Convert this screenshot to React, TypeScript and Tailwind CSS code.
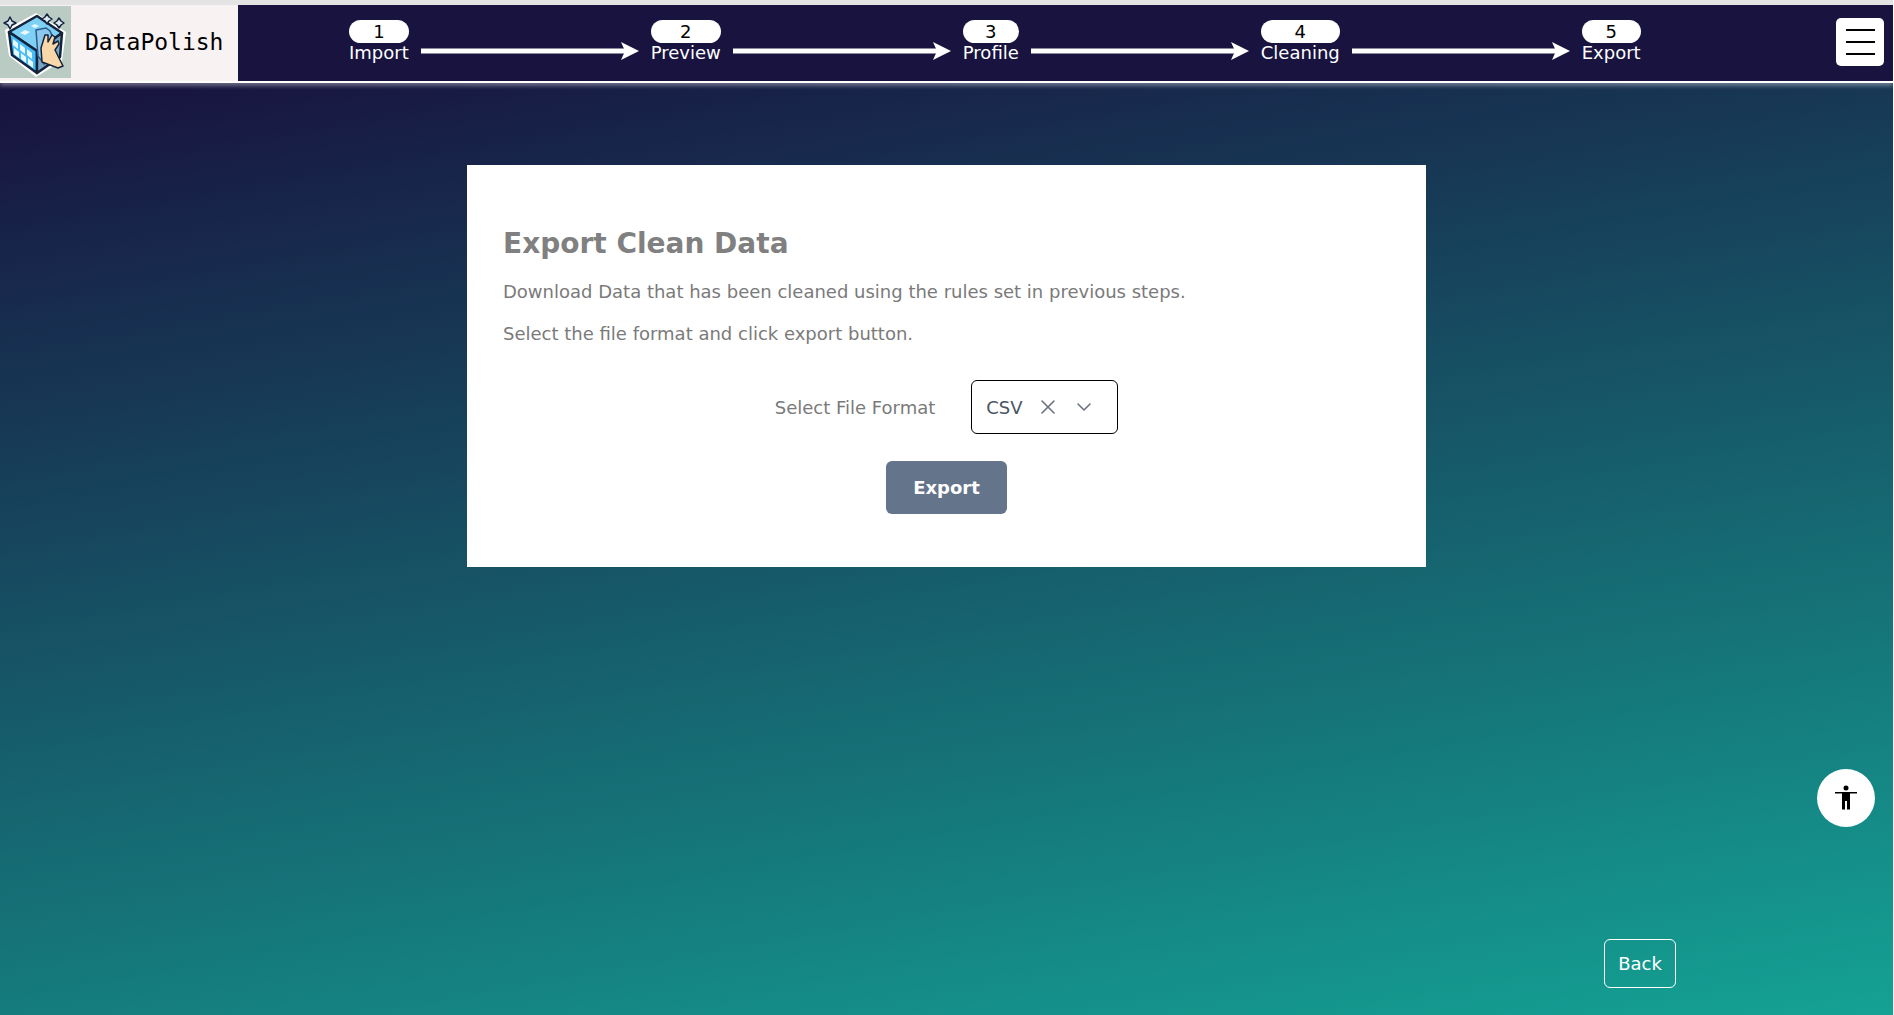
import { Fragment } from 'react'
import { ChevronDown, X } from 'lucide-react'

const steps = [
  { n: 1, label: 'Import' },
  { n: 2, label: 'Preview' },
  { n: 3, label: 'Profile' },
  { n: 4, label: 'Cleaning' },
  { n: 5, label: 'Export' },
]

function Logo() {
  return (
    <svg viewBox="0 0 71 72" className="w-[71px] h-[72px] shrink-0 bg-[#b9cbc2]">
      <path d="M36 7 L66 26 L62 55 L36 71 L9 50 L5 24 Z" fill="#fff" />
      <path d="M9 26 L37 10 L62 27 L37 45 Z" fill="#7fd0f5" stroke="#14233c" strokeWidth="2.5" strokeLinejoin="round" />
      <path d="M9 26 L37 45 L37 67 L12 49 Z" fill="#47bdf8" stroke="#14233c" strokeWidth="2.5" strokeLinejoin="round" />
      <path d="M37 45 L62 27 L60 51 L37 67 Z" fill="#7aa6c4" stroke="#14233c" strokeWidth="2.5" strokeLinejoin="round" />
      <path d="M13 33 l5 4 v6 l-5 -4 Z M20 38 l5 4 v6 l-5 -4 Z M27 43 l5 4 v6 l-5 -4 Z M14 42 l5 4 v6 l-5 -4 Z M21 47 l5 4 v6 l-5 -4 Z M28 52 l5 4 v6 l-5 -4 Z" fill="#e8f8ff" />
      <path d="M20 27 l5 -3 l5 2 l-5 3 Z M31 20 l4 -2 l4 2 l-4 2 Z" fill="#e8f8ff" />
      <path d="M36 24 L46 22 L50 25 L54 34 L44 58 L38 50 Z" fill="#8cc8ee" stroke="#2a5d8a" strokeWidth="1.5" />
      <path d="M42 56 L41 42 L45 29 L48 29 L48 36 L52 29 L55 31 L53 38 L58 35 L59 38 L55 44 L58 50 L63 60 L58 62 L50 59 Z" fill="#fad7a8" stroke="#14233c" strokeWidth="1.5" strokeLinejoin="round" />
      <path d="M10 11 l2 4 l4 2 l-4 2 l-2 4 l-2 -4 l-4 -2 l4 -2 Z M47 8 l2 3 l3 2 l-3 2 l-2 3 l-2 -3 l-3 -2 l3 -2 Z M59 12 l2 3 l3 2 l-3 2 l-2 3 l-2 -3 l-3 -2 l3 -2 Z" fill="#dfeaf2" stroke="#14233c" strokeWidth="1.5" strokeLinejoin="round" />
    </svg>
  )
}

function Arrow() {
  return (
    <svg viewBox="0 0 218 18" className="w-[218px] h-[18px] shrink-0 mt-[22px] mx-3">
      <path d="M0 9 H204" stroke="#fff" strokeWidth="5" />
      <path d="M200 0 L218 9 L200 18 L204 9 Z" fill="#fff" />
    </svg>
  )
}

function AccessibilityIcon() {
  return (
    <svg viewBox="0 0 24 26" className="w-6 h-[26px]">
      <circle cx="12" cy="3" r="2.5" fill="#000" />
      <path d="M1 7 H23 V8.5 H16 V24.5 H13 V16 H11 V24.5 H8 V8.5 H1 Z" fill="#000" />
    </svg>
  )
}

export default function App() {
  return (
    <div className="min-h-screen h-[1015px] overflow-hidden flex flex-col bg-[linear-gradient(170deg,#181440_0%,#181440_8%,#14a294_100%)] font-['DejaVu_Sans',sans-serif] border-r border-white">
      <header className="shrink-0 h-[83px] border-t-[5px] border-t-[#e4e4e4] border-b-2 border-b-white bg-[#18143f] flex shadow-[0_3px_4px_rgba(255,255,255,0.35)]">
        <div className="w-[238px] h-[76px] bg-[#f8f2f2] flex items-start shrink-0">
          <div className="mt-px">
            <Logo />
          </div>
          <span className="ml-[14px] mt-[20px] text-[23px] leading-[34px] text-black font-['DejaVu_Sans_Mono',monospace]">DataPolish</span>
        </div>
        <nav className="flex items-start pl-[111px] pt-[15px]">
          {steps.map((step, i) => (
            <Fragment key={step.n}>
              {i > 0 && <Arrow />}
              <div className="flex flex-col items-stretch">
                <div className="h-[23px] rounded-full bg-white text-black text-center text-[18px] leading-[23px]">{step.n}</div>
                <div className="text-white text-[18px] leading-[22px] -mt-px text-center">{step.label}</div>
              </div>
            </Fragment>
          ))}
        </nav>
        <button className="ml-auto mr-[9px] mt-[13px] w-[48px] h-[48px] rounded-[5px] bg-white flex flex-col items-center justify-center gap-[10px]">
          <span className="block w-[29px] h-[2px] bg-black" />
          <span className="block w-[29px] h-[2px] bg-black" />
          <span className="block w-[29px] h-[2px] bg-black" />
        </button>
      </header>

      <main className="flex-1 flex flex-col">
        <section className="self-center mt-[82px] w-[959px] h-[402px] bg-white pl-[36px] pr-[36px] pt-[58px]">
          <h1 className="text-[28px] leading-[42px] font-bold text-[#808080]">Export Clean Data</h1>
          <p className="mt-[13px] text-[18px] leading-[27px] text-[#7a7a7a]">Download Data that has been cleaned using the rules set in previous steps.</p>
          <p className="mt-[15px] text-[18px] leading-[27px] text-[#7a7a7a]">Select the file format and click export button.</p>
          <div className="mt-[33px] flex items-center justify-center gap-[36px]">
            <label className="text-[18px] leading-[27px] text-[#7a7a7a]">Select File Format</label>
            <div className="w-[147px] h-[54px] rounded-[6px] border border-black flex items-center pl-[14px]">
              <span className="text-[18px] text-[#4b5563]">CSV</span>
              <X className="ml-[13px] text-[#6b7280]" size={24} strokeWidth={1.6} />
              <ChevronDown className="ml-[12px] text-[#6b7280]" size={24} strokeWidth={1.6} />
            </div>
          </div>
          <div className="mt-[27px] flex justify-center">
            <button className="w-[121px] h-[53px] rounded-[6px] bg-[#64748b] text-white text-[18px] font-bold">Export</button>
          </div>
        </section>
        <div className="mt-auto flex justify-end pr-[217px] pb-[27px]">
          <button className="w-[72px] h-[49px] rounded-[6px] border border-white text-white text-[18px]">Back</button>
        </div>
      </main>

      <button className="fixed left-[1817px] top-[769px] w-[58px] h-[58px] rounded-full bg-white flex items-center justify-center">
        <AccessibilityIcon />
      </button>
    </div>
  )
}
